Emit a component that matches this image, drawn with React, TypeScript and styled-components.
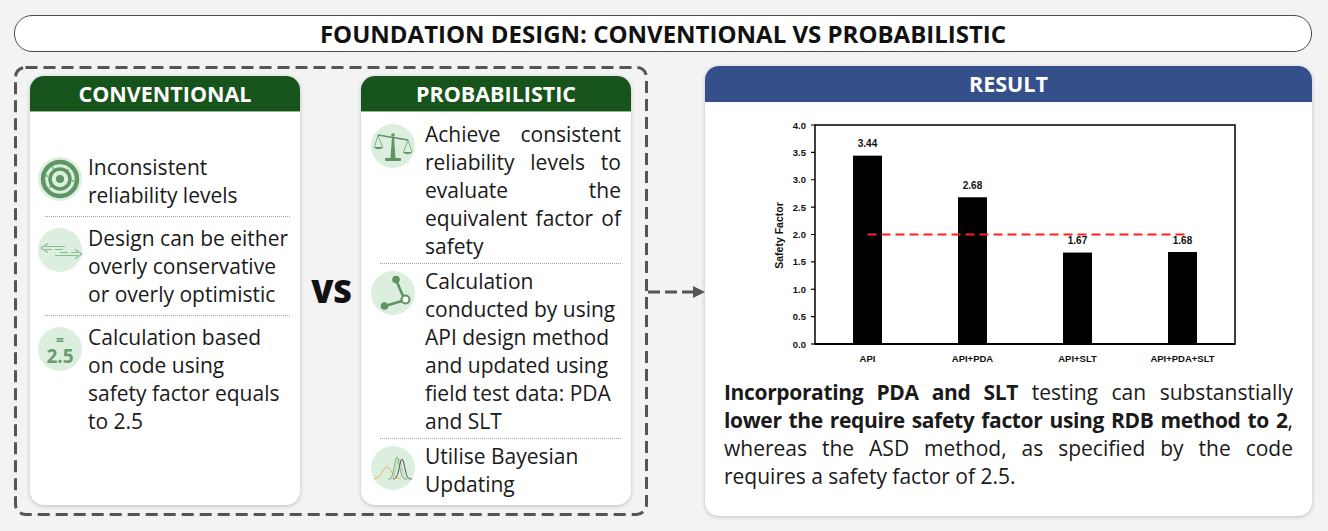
import React from "react";
import styled, { createGlobalStyle } from "styled-components";

const GlobalStyle = createGlobalStyle`
  html, body { margin: 0; padding: 0; background: #f3f3f3; }
  body { font-family: "Open Sans", Roboto, Arial, sans-serif; color: #1a1a1a; }
  * { box-sizing: border-box; }
`;

const Page = styled.div`
  width: 1328px;
  height: 531px;
  padding: 15px 16px 0 14px;
`;

const TitleBar = styled.h1`
  margin: 0;
  height: 37px;
  border: 1.5px solid #4d4d4d;
  border-radius: 18px;
  background: #ffffff;
  display: flex;
  align-items: center;
  justify-content: center;
  font-size: 24px;
  font-weight: 700;
  color: #111;
`;

const MainRow = styled.div`
  display: flex;
  margin-top: 14px;
  height: 450px;
`;

const CompareFrame = styled.section`
  position: relative;
  width: 634px;
  height: 450px;
  display: flex;
  padding: 10px 17px 11px 16px;
`;

const FrameOutline = styled.svg`
  position: absolute;
  left: 0;
  top: 0;
  pointer-events: none;
`;

const Card = styled.div`
  width: 270px;
  display: flex;
  flex-direction: column;
  background: #ffffff;
  border-radius: 14px;
  overflow: hidden;
  box-shadow: 0 1px 4px rgba(0, 0, 0, 0.22);
`;

const CardHeader = styled.div<{ $tone: string; $edge: string }>`
  height: 36px;
  flex-shrink: 0;
  background: ${(p) => p.$tone};
  border-bottom: 1px solid ${(p) => p.$edge};
  color: #ffffff;
  display: flex;
  align-items: center;
  justify-content: center;
  font-size: 21.5px;
  font-weight: 700;
`;

const CardBody = styled.div<{ $top: number; $left: number; $gap: number }>`
  display: flex;
  flex-direction: column;
  padding: ${(p) => p.$top}px 10px 0 ${(p) => p.$left}px;
  row-gap: ${(p) => p.$gap}px;
`;

const Item = styled.div<{ $gap: number }>`
  display: flex;
  align-items: flex-start;
  column-gap: ${(p) => p.$gap}px;
`;

const IconBadge = styled.div`
  width: 44px;
  height: 44px;
  flex-shrink: 0;
  margin-top: 4px;
  border-radius: 50%;
  background: #dcefdf;
  display: flex;
  flex-direction: column;
  align-items: center;
  justify-content: center;
  color: #6a9b6e;
`;

const ItemText = styled.p<{ $justify?: boolean }>`
  margin: 0;
  flex: 1;
  font-size: 21px;
  line-height: 28px;
  white-space: pre-line;
  text-align: ${(p) => (p.$justify ? "justify" : "left")};
  color: #1a1a1a;
`;

const Divider = styled.hr<{ $indent: number }>`
  margin: 0 0 0 ${(p) => p.$indent}px;
  border: none;
  border-top: 1.5px dotted #a0a0a0;
  height: 0;
`;

const VsColumn = styled.div`
  flex: 1;
  display: flex;
  align-items: center;
  justify-content: center;
  font-size: 32px;
  font-weight: 800;
  color: #111;
  padding-left: 2px;
`;

const Connector = styled.div`
  width: 57px;
  align-self: center;
  display: flex;
  align-items: center;
  margin-top: 1px;
`;

const ResultCard = styled.section`
  width: 607px;
  height: 450px;
  display: flex;
  flex-direction: column;
  background: #ffffff;
  border-radius: 14px;
  overflow: hidden;
  box-shadow: 0 1px 4px rgba(0, 0, 0, 0.22);
`;

const ChartWrap = styled.div`
  padding-left: 55px;
  margin-top: 9px;
  height: 256px;
`;

const Summary = styled.p`
  margin: 11px 0 0;
  padding: 0 19px;
  font-size: 21px;
  line-height: 28px;
  text-align: justify;
  color: #1a1a1a;
`;

const Strong = styled.b`
  font-weight: 700;
  letter-spacing: -0.35px;
`;

const EqualSign = styled.span`
  display: block;
  font-size: 14px;
  font-weight: 700;
  line-height: 14px;
  height: 14px;
`;

const BigValue = styled.span`
  display: block;
  font-size: 19px;
  font-weight: 700;
  line-height: 19px;
  height: 19px;
`;

/* ---------- icons ---------- */

const TargetIcon = () => (
  <svg width="44" height="44" viewBox="0 0 44 44">
    <circle cx="22" cy="22" r="17" fill="none" stroke="#5f9463" strokeWidth="4.5" />
    <circle cx="22" cy="22" r="10" fill="none" stroke="#5f9463" strokeWidth="3.5" />
    <circle cx="22" cy="22" r="4" fill="#5f9463" />
    {[
      [15, 11],
      [30, 13],
      [35, 24],
      [12, 30],
      [9, 19],
    ].map(([x, y], i) => (
      <circle key={i} cx={x} cy={y} r="0.9" fill="#2fbf4a" />
    ))}
  </svg>
);

const ArrowsIcon = () => (
  <svg width="44" height="44" viewBox="0 0 44 44" style={{ overflow: "visible" }}>
    <g fill="none" stroke="#8dbb90" strokeWidth="1.2" strokeLinejoin="round">
      <polyline points="10,15.5 3,20 10,24.5" />
      <line x1="7" y1="18.5" x2="27" y2="18.5" />
      <line x1="7" y1="21.5" x2="14" y2="21.5" />
      <line x1="17" y1="21.5" x2="25" y2="21.5" />
      <polyline points="37,21.5 44,26 37,30.5" />
      <line x1="17" y1="27.5" x2="40" y2="27.5" />
      <line x1="22" y1="24.5" x2="30" y2="24.5" />
      <line x1="33" y1="24.5" x2="40" y2="24.5" />
    </g>
  </svg>
);

const ScaleIcon = () => (
  <svg width="44" height="44" viewBox="0 0 44 44">
    <g stroke="#5f9463" fill="#5f9463">
      <line x1="7" y1="11" x2="37" y2="16" strokeWidth="1.6" />
      <circle cx="22" cy="11" r="1.8" stroke="none" />
      <polygon points="21,13 23,13 24.5,34 19.5,34" stroke="none" />
      <rect x="14" y="34" width="16" height="3" rx="1" stroke="none" />
      <line x1="7" y1="11" x2="3.5" y2="23" strokeWidth="0.7" />
      <line x1="7" y1="11" x2="11.5" y2="23" strokeWidth="0.7" />
      <path d="M2.5 23 Q7.5 27.5 12.5 23 Z" stroke="none" />
      <line x1="37" y1="16" x2="32.5" y2="28" strokeWidth="0.7" />
      <line x1="37" y1="16" x2="41" y2="28" strokeWidth="0.7" />
      <path d="M31.5 28 Q36.5 32.5 41.5 28 Z" stroke="none" />
    </g>
  </svg>
);

const NetworkIcon = () => (
  <svg width="44" height="44" viewBox="0 0 44 44">
    <g stroke="#5f9463" strokeWidth="2.6" fill="none" strokeLinecap="round">
      <line x1="25" y1="9" x2="32" y2="25" />
      <line x1="31" y1="30" x2="14" y2="35" />
      <circle cx="34.5" cy="28.5" r="4" strokeWidth="2.2" fill="#ffffff" />
    </g>
    <circle cx="25" cy="8.5" r="3.8" fill="#5f9463" />
    <circle cx="13.5" cy="35" r="3.8" fill="#5f9463" />
  </svg>
);

const gauss = (c: number, s: number, h: number, x0: number, x1: number, base = 33) => {
  const pts: string[] = [];
  for (let x = x0; x <= x1; x += 0.5) {
    const y = base - h * Math.exp(-((x - c) * (x - c)) / (2 * s * s));
    pts.push(`${x.toFixed(1)},${y.toFixed(2)}`);
  }
  return "M" + pts.join(" L");
};

const BellIcon = () => (
  <svg width="44" height="44" viewBox="0 0 44 44">
    <g fill="none" strokeWidth="1">
      <path d={gauss(16, 4.5, 12, 3, 30)} stroke="#f0a458" />
      <path d={gauss(28, 2.6, 20, 18, 38)} stroke="#a9d3a5" />
      <path d={gauss(26, 2.5, 22, 17, 36)} stroke="#6fae70" />
      <path d={gauss(31, 2.6, 20, 22, 41)} stroke="#4f4f4f" />
    </g>
  </svg>
);

const EqualsIcon = () => (
  <>
    <EqualSign>=</EqualSign>
    <BigValue>2.5</BigValue>
  </>
);

/* ---------- data ---------- */

type Entry = { icon: React.ReactNode; text: string; justify?: boolean };

const conventional: Entry[] = [
  { icon: <TargetIcon />, text: "Inconsistent reliability levels" },
  { icon: <ArrowsIcon />, text: "Design can be either overly conservative or overly optimistic" },
  { icon: <EqualsIcon />, text: "Calculation based\non code using\nsafety factor equals\nto 2.5" },
];

const probabilistic: Entry[] = [
  {
    icon: <ScaleIcon />,
    text: "Achieve consistent reliability levels to evaluate the equivalent factor of safety",
    justify: true,
  },
  {
    icon: <NetworkIcon />,
    text: "Calculation conducted by using API design method and updated using field test data: PDA and SLT",
  },
  { icon: <BellIcon />, text: "Utilise Bayesian Updating" },
];

const bars = [
  { label: "API", value: 3.44 },
  { label: "API+PDA", value: 2.68 },
  { label: "API+SLT", value: 1.67 },
  { label: "API+PDA+SLT", value: 1.68 },
];

/* ---------- parts ---------- */

const ItemList = ({
  entries,
  top,
  left,
  iconGap,
  gap,
  indent,
}: {
  entries: Entry[];
  top: number;
  left: number;
  iconGap: number;
  gap: number;
  indent: number;
}) => (
  <CardBody $top={top} $left={left} $gap={gap}>
    {entries.map((e, i) => (
      <React.Fragment key={i}>
        {i > 0 && <Divider $indent={indent} />}
        <Item $gap={iconGap}>
          <IconBadge>{e.icon}</IconBadge>
          <ItemText $justify={e.justify}>{e.text}</ItemText>
        </Item>
      </React.Fragment>
    ))}
  </CardBody>
);

const Chart = () => {
  const x0 = 55;
  const x1 = 475;
  const yTop = 14;
  const yBot = 233;
  const unit = (yBot - yTop) / 4;
  const band = (x1 - x0) / bars.length;
  const ticks = [0, 0.5, 1, 1.5, 2, 2.5, 3, 3.5, 4];
  const font = '"Liberation Sans", Arial, sans-serif';
  const redY = yBot - 2 * unit;
  return (
    <svg width="490" height="256" viewBox="0 0 490 256">
      <rect x={x0} y={yTop} width={x1 - x0} height={yBot - yTop} fill="#fff" stroke="#000" strokeWidth="1.5" />
      <line x1={x0} y1={yBot} x2={x1} y2={yBot} stroke="#000" strokeWidth="2" />
      {ticks.map((t) => {
        const y = yBot - t * unit;
        return (
          <g key={t}>
            <line x1={x0 - 4} y1={y} x2={x0} y2={y} stroke="#000" strokeWidth="1.2" />
            <text
              x={x0 - 9}
              y={y + 3.5}
              textAnchor="end"
              fontFamily={font}
              fontWeight="700"
              fontSize="9.5"
              fill="#111"
            >
              {t.toFixed(1)}
            </text>
          </g>
        );
      })}
      {bars.map((b, i) => {
        const cx = x0 + band * (i + 0.5);
        const top = yBot - b.value * unit;
        return (
          <g key={b.label}>
            <rect x={cx - 14.5} y={top} width={29} height={yBot - top} fill="#000" />
            <text
              x={cx}
              y={top - 8.5}
              textAnchor="middle"
              fontFamily={font}
              fontWeight="700"
              fontSize="10"
              fill="#111"
            >
              {b.value.toFixed(2)}
            </text>
            <text
              x={cx}
              y={250.5}
              textAnchor="middle"
              fontFamily={font}
              fontWeight="700"
              fontSize="9.5"
              fill="#111"
            >
              {b.label}
            </text>
          </g>
        );
      })}
      <line
        x1={x0 + band * 0.5}
        y1={redY}
        x2={x0 + band * 3.5 + 2}
        y2={redY}
        stroke="#ff1f1f"
        strokeWidth="2"
        strokeDasharray="9 5"
      />
      <text
        x={0}
        y={0}
        transform={`translate(23 ${(yTop + yBot) / 2 + 1}) rotate(-90)`}
        textAnchor="middle"
        fontFamily={font}
        fontWeight="700"
        fontSize="10.5"
        fill="#111"
      >
        Safety Factor
      </text>
    </svg>
  );
};

export default function App() {
  return (
    <>
      <GlobalStyle />
      <Page>
        <TitleBar>FOUNDATION DESIGN: CONVENTIONAL VS PROBABILISTIC</TitleBar>
        <MainRow>
          <CompareFrame>
            <FrameOutline width="634" height="450" viewBox="0 0 634 450">
              <rect
                x="1.5"
                y="1.5"
                width="631"
                height="447"
                rx="10"
                fill="none"
                stroke="#555"
                strokeWidth="3"
                strokeDasharray="12 6"
              />
            </FrameOutline>
            <Card>
              <CardHeader $tone="#16541b" $edge="#8fb892">
                CONVENTIONAL
              </CardHeader>
              <ItemList entries={conventional} top={41} left={8} iconGap={6} gap={7} indent={7} />
            </Card>
            <VsColumn>VS</VsColumn>
            <Card>
              <CardHeader $tone="#16541b" $edge="#8fb892">
                PROBABILISTIC
              </CardHeader>
              <ItemList entries={probabilistic} top={8} left={10} iconGap={10} gap={3} indent={9} />
            </Card>
          </CompareFrame>
          <Connector>
            <svg width="57" height="14" viewBox="0 0 57 14">
              <line x1="0" y1="7" x2="45" y2="7" stroke="#555" strokeWidth="3" strokeDasharray="12 5" />
              <polygon points="45,1 57,7 45,13" fill="#555" />
            </svg>
          </Connector>
          <ResultCard>
            <CardHeader $tone="#344f8a" $edge="#344f8a">
              RESULT
            </CardHeader>
            <ChartWrap>
              <Chart />
            </ChartWrap>
            <Summary>
              <Strong>Incorporating PDA and SLT</Strong> testing can substanstially{" "}
              <Strong>lower the require safety factor using RDB method to 2</Strong>, whereas the ASD
              method, as specified by the code requires a safety factor of 2.5.
            </Summary>
          </ResultCard>
        </MainRow>
      </Page>
    </>
  );
}
